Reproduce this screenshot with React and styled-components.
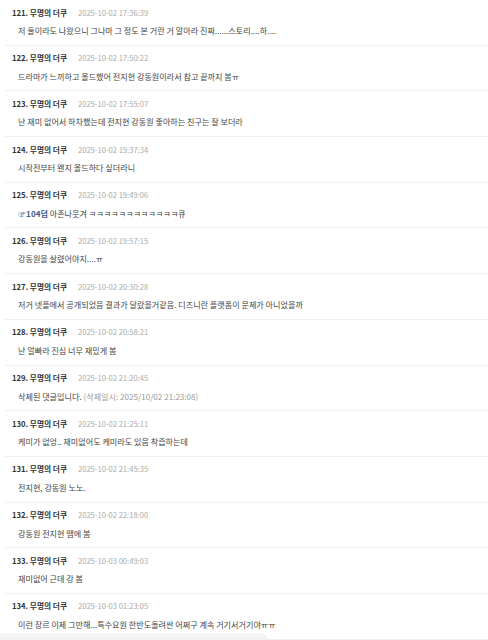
import React from 'react';
import styled, { createGlobalStyle } from 'styled-components';

const comments = [
  { no: 121, date: '2025-10-02 17:36:39', text: '저 둘이라도 나왔으니 그나마 그 정도 본 거란 거 알아라 진짜......스토리....하....' },
  { no: 122, date: '2025-10-02 17:50:22', text: '드라마가 느끼하고 올드했어 전지현 강동원이라서 참고 끝까지 봄ㅠ' },
  { no: 123, date: '2025-10-02 17:55:07', text: '난 재미 없어서 하차했는데 전지현 강동원 좋아하는 친구는 잘 보더라' },
  { no: 124, date: '2025-10-02 19:37:34', text: '시작전부터 왠지 올드하다 싶더라니' },
  { no: 125, date: '2025-10-02 19:49:06', anchor: '104덥', text: ' 아존나웃겨 ㅋㅋㅋㅋㅋㅋㅋㅋㅋㅋㅋㅋ큐' },
  { no: 126, date: '2025-10-02 19:57:15', text: '강동원을 살렸어야지....ㅠ' },
  { no: 127, date: '2025-10-02 20:30:28', text: '저거 넷플에서 공개되었음 결과가 달랐을거같음. 디즈니란 플랫폼이 문제가 아니었을까' },
  { no: 128, date: '2025-10-02 20:58:21', text: '난 얼빠라 진심 너무 재밌게 봄' },
  { no: 129, date: '2025-10-02 21:20:45', text: '삭제된 댓글입니다.', deleted: '(삭제일시: 2025/10/02 21:23:08)' },
  { no: 130, date: '2025-10-02 21:25:11', text: '케미가 없엉.. 재미없어도 케미라도 있음 착즙하는데' },
  { no: 131, date: '2025-10-02 21:45:35', text: '전지현, 강동원 노노.' },
  { no: 132, date: '2025-10-02 22:18:00', text: '강동원 전지현 땜에 봄' },
  { no: 133, date: '2025-10-03 00:49:03', text: '재미없어 근데 강 봄' },
  { no: 134, date: '2025-10-03 01:23:05', text: '이런 장르 이제 그만해...특수요원 한반도돌려싼 어쩌구 계속 거기서거기야ㅠㅠ' },
];

function App() {
  return (
    <>
      <GlobalStyle />
      <List>
        {comments.map((c) => (
          <Item key={c.no}>
            <Header>
              <Writer>{c.no}. 무명의 더쿠</Writer>
              <DateText>{c.date}</DateText>
            </Header>
            <Content>
              {c.anchor && (
                <Anchor><span>☞</span>{c.anchor}</Anchor>
              )}
              {c.text}
              {c.deleted && <Deleted> {c.deleted}</Deleted>}
            </Content>
          </Item>
        ))}
      </List>
      <BottomFade />
    </>
  );
}

const GlobalStyle = createGlobalStyle`
  body {
    margin: 0;
    background: #ffffff;
    font-family: "Noto Sans CJK KR", "Noto Sans", sans-serif;
  }
`;

const List = styled.ul`
  list-style: none;
  margin: 0;
  padding: 0;
`;

const Item = styled.li`
  box-sizing: border-box;
  height: 45.7px;
  margin-left: 5px;
  padding: 5px 0 0 7px;
  border-bottom: 1px solid #f0f0f0;
  display: flex;
  flex-direction: column;
  gap: 5px;
`;

const Header = styled.div`
  display: flex;
  align-items: center;
  gap: 11px;
  height: 14px;
`;

const Writer = styled.span`
  font-size: 7.7px;
  font-weight: 700;
  color: #333333;
  white-space: nowrap;
`;

const DateText = styled.span`
  font-size: 7.6px;
  color: #aaaaaa;
  white-space: nowrap;
`;

const Content = styled.div`
  height: 14px;
  line-height: 14px;
  padding-left: 6px;
  font-size: 8.1px;
  color: #444444;
  white-space: nowrap;
`;

const Anchor = styled.span`
  color: #3d5a8c;
  font-weight: 700;
  span {
    font-weight: 400;
  }
`;

const Deleted = styled.span`
  color: #999999;
`;

const BottomFade = styled.div`
  position: fixed;
  left: 0;
  bottom: 0;
  width: 268px;
  height: 7px;
  background: #f3f3f3;
  border-top-right-radius: 8px;
`;

export default App;
